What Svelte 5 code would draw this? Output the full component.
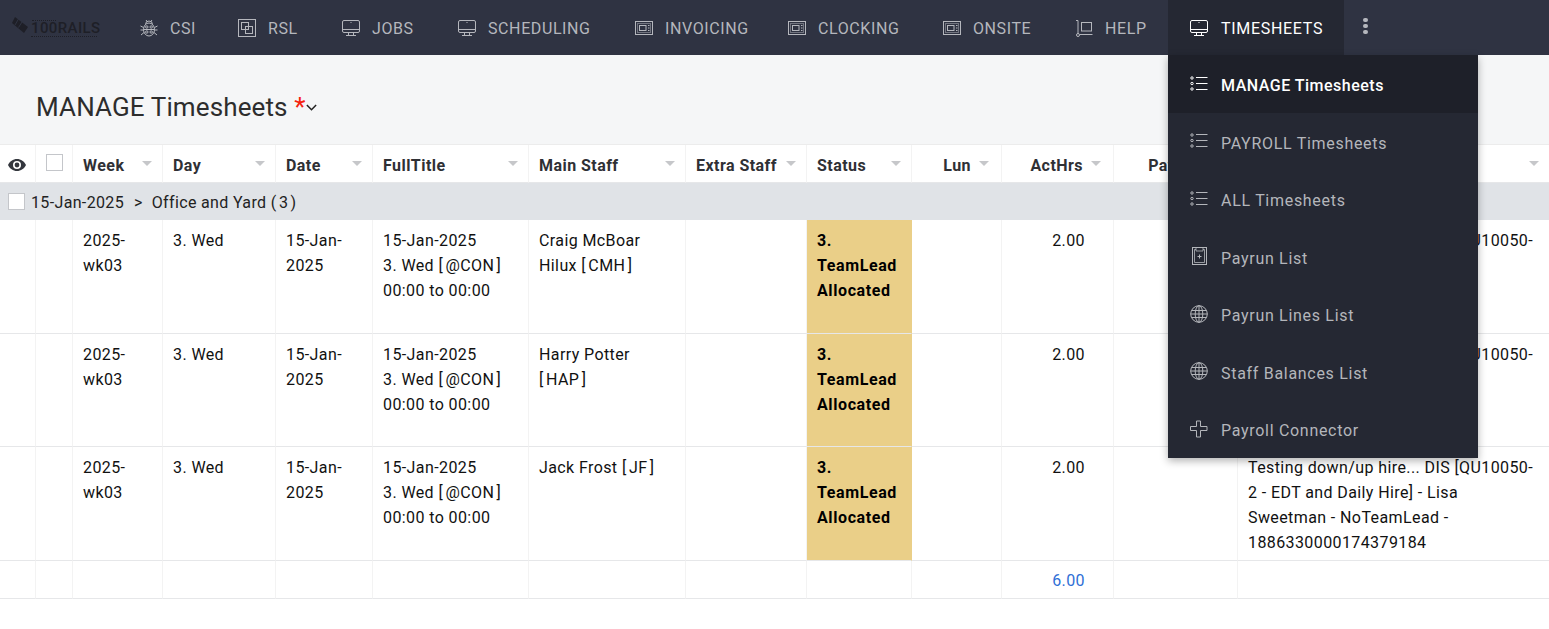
<script lang="ts">
	const navItems = [
		{ label: 'CSI', icon: 'bug' },
		{ label: 'RSL', icon: 'copy' },
		{ label: 'JOBS', icon: 'monitor' },
		{ label: 'SCHEDULING', icon: 'monitor' },
		{ label: 'INVOICING', icon: 'oven' },
		{ label: 'CLOCKING', icon: 'oven' },
		{ label: 'ONSITE', icon: 'oven' },
		{ label: 'HELP', icon: 'trolley' },
		{ label: 'TIMESHEETS', icon: 'monitor', active: true }
	];

	const menuItems = [
		{ label: 'MANAGE Timesheets', icon: 'list', active: true },
		{ label: 'PAYROLL Timesheets', icon: 'list' },
		{ label: 'ALL Timesheets', icon: 'list' },
		{ label: 'Payrun List', icon: 'clipboard' },
		{ label: 'Payrun Lines List', icon: 'globe' },
		{ label: 'Staff Balances List', icon: 'globe' },
		{ label: 'Payroll Connector', icon: 'plus' }
	];

	const columns = [
		{ label: 'Week' },
		{ label: 'Day' },
		{ label: 'Date' },
		{ label: 'FullTitle' },
		{ label: 'Main Staff' },
		{ label: 'Extra Staff' },
		{ label: 'Status' },
		{ label: 'Lun', right: true },
		{ label: 'ActHrs', right: true },
		{ label: 'PayHrs', right: true },
		{ label: 'Description' }
	];

	const rows = [
		{ staff: 'Craig McBoar Hilux [\u202fCMH\u202f]' },
		{ staff: 'Harry Potter [\u202fHAP\u202f]' },
		{ staff: 'Jack Frost [\u202fJF\u202f]' }
	];
</script>

{#snippet icon(name: string)}
	<svg class="icon" viewBox="0 0 18 18" fill="none" stroke="currentColor" stroke-width="1">
		{#if name === 'bug'}
			<ellipse cx="9" cy="10.500" rx="5.500" ry="6.500" />
			<path d="M5.500 5.500a3.500 3.500 0 0 1 7 0M3.500 10.500h11M6 1 7.500 3M12 1 10.500 3M.5 7l3 1.500M17.500 7l-3 1.500M.5 11h3M17.500 11h-3M1 16l3-2.500M17 16l-3-2.500" />
			<circle cx="6.800" cy="8" r="1.200" />
			<circle cx="11.200" cy="8" r="1.200" />
			<circle cx="6.800" cy="13" r="1.200" />
			<circle cx="11.200" cy="13" r="1.200" />
		{:else if name === 'copy'}
			<rect x="0.500" y="0.500" width="17" height="17" />
			<rect x="3.500" y="3.500" width="7" height="7" />
			<rect x="7.500" y="7.500" width="7" height="7" />
		{:else if name === 'monitor'}
			<rect x="0.500" y="1.500" width="17" height="12" rx="1.500" />
			<path d="M0.500 10.500h17M6.500 13.500v2.500M11.500 13.500v2.500M4 16.500h10" />
			<path d="M8.500 3.500h1" />
		{:else if name === 'oven'}
			<rect x="0.500" y="2.500" width="17" height="13" />
			<rect x="2.500" y="4.500" width="13" height="9" stroke-opacity="0.5" />
			<rect x="4.500" y="6.500" width="6.500" height="5" />
			<path d="M13 6.500h1.500M13 9h1.500M13 11.500h1.500" />
		{:else if name === 'trolley'}
			<path d="M1 1.500h2v13.500M5 15.500h12.500" />
			<rect x="6.500" y="3.500" width="10" height="8.500" />
			<circle cx="3" cy="16" r="1.500" />
		{:else if name === 'list'}
			<circle cx="2" cy="3" r="1.200" />
			<circle cx="2" cy="8.500" r="1.200" />
			<circle cx="2" cy="14" r="1.200" />
			<path d="M6 2.500h11.500M6 8.500h11.500M6 14.500h11.500" />
		{:else if name === 'clipboard'}
			<rect x="2.500" y="0.500" width="14" height="17" />
			<path d="M4.500 2.500v13h10v-13h-1.500M6 2.500H4.500M6 1v3h7V1" stroke-opacity="0.8" />
			<path d="M9.500 7.500v4M7.500 9.500h4" />
		{:else if name === 'globe'}
			<circle cx="9" cy="9" r="8.300" />
			<ellipse cx="9" cy="9" rx="3.800" ry="8.300" />
			<path d="M9 .7v16.600M1.700 5.500h14.600M.7 9h16.600M1.700 12.500h14.600" />
		{:else if name === 'plus'}
			<path d="M6.500 1h4v5.500h6.500v4h-6.500V17h-4v-6.500H.5v-4h6z" />
		{/if}
	</svg>
{/snippet}

{#snippet sortHead(col: { label: string; right?: boolean })}
	<div class="th-inner" class:right={col.right}>
		<span>{col.label}</span>
		<i class="caret"></i>
	</div>
{/snippet}

<div class="page">
	<nav class="topbar">
		<div class="logo">
			<svg class="logo-mark" viewBox="0 0 16 16">
				<path fill="#1e1f27" d="M3 0 16 10l-4 6L0 6z" />
				<path stroke="#2f3342" stroke-width="1" d="M6.500 2 3 8M10 5 6.500 10.500" />
			</svg>
			<div class="logo-words">
				<span class="logo-rule short"></span>
				<span class="logo-text">100RAILS</span>
				<span class="logo-rule"></span>
			</div>
		</div>
		{#each navItems as item}
			<div class="nav-item" class:active={item.active}>
				{@render icon(item.icon)}
				<span>{item.label}</span>
			</div>
		{/each}
		<div class="kebab"><b></b><b></b><b></b></div>
	</nav>

	<header class="title-band">
		<h1>MANAGE Timesheets <em>*</em></h1>
		<svg class="chev" viewBox="0 0 10 6" fill="none" stroke="currentColor" stroke-width="1.400"><path d="M.8.8 5 5l4.200-4.200" /></svg>
	</header>

	<table>
		<colgroup>
			<col style="width:36px" />
			<col style="width:37px" />
			<col style="width:90px" />
			<col style="width:113px" />
			<col style="width:97px" />
			<col style="width:156px" />
			<col style="width:157px" />
			<col style="width:121px" />
			<col style="width:105px" />
			<col style="width:90px" />
			<col style="width:112px" />
			<col style="width:124px" />
			<col />
		</colgroup>
		<thead>
			<tr>
				<th class="eye-cell">
					<svg viewBox="0 0 18 12" width="18" height="12"><path fill="#33363d" d="M9 0C5 0 1.700 2.500 0 6c1.700 3.500 5 6 9 6s7.300-2.500 9-6c-1.700-3.500-5-6-9-6zm0 10a4 4 0 1 1 0-8 4 4 0 0 1 0 8zm0-6.400a2.400 2.400 0 1 0 0 4.800 2.400 2.400 0 0 0 0-4.800z" /></svg>
				</th>
				<th class="check-cell"><span class="checkbox"></span></th>
				{#each columns as col}
					<th>{@render sortHead(col)}</th>
				{/each}
			</tr>
		</thead>
		<tbody>
			<tr class="group">
				<td colspan="13">
					<div class="group-inner">
						<span class="checkbox"></span>
						<span>15-Jan-2025</span>
						<span class="gt">&gt;</span>
						<span>Office and Yard (&#8239;3&#8239;)</span>
					</div>
				</td>
			</tr>
			{#each rows as row}
				<tr class="data">
					<td></td>
					<td></td>
					<td>2025-wk03</td>
					<td>3. Wed</td>
					<td>15-Jan-2025</td>
					<td>15-Jan-2025<br />3. Wed [&#8239;@CON&#8239;]<br />00:00 to 00:00</td>
					<td>{row.staff}</td>
					<td></td>
					<td class="status">3. TeamLead Allocated</td>
					<td></td>
					<td class="num">2.00</td>
					<td></td>
					<td>Testing down/up hire... DIS [QU10050-2 - EDT and Daily Hire] - Lisa Sweetman - NoTeamLead - 1886330000174379184</td>
				</tr>
			{/each}
			<tr class="totals">
				<td></td>
				<td></td>
				<td></td>
				<td></td>
				<td></td>
				<td></td>
				<td></td>
				<td></td>
				<td></td>
				<td></td>
				<td class="num total">6.00</td>
				<td></td>
				<td></td>
			</tr>
		</tbody>
	</table>

	<ul class="menu">
		{#each menuItems as item}
			<li class:active={item.active}>
				{@render icon(item.icon)}
				<span>{item.label}</span>
			</li>
		{/each}
	</ul>
</div>

<style>
	:global(body) {
		background: #fff;
	}

	.page {
		position: relative;
		height: 629px;
		overflow: hidden;
		font-family: Roboto, 'Liberation Sans', sans-serif;
		font-size: 16px;
		color: #111;
	}

	.topbar {
		display: grid;
		grid-template-columns: 118px 98px 104px 116px 177px 153px 155px 132px 115px 176px 44px;
		height: 55px;
		background: #2f3342;
		color: #b5b7bd;
	}

	.logo {
		display: flex;
		align-items: center;
		gap: 3px;
		padding-left: 12px;
		color: #1e1f27;
	}

	.logo-mark {
		flex: none;
		width: 16px;
		height: 16px;
		margin-top: -5px;
	}

	.logo-words {
		display: flex;
		flex-direction: column;
		gap: 1px;
		margin-top: 1px;
	}

	.logo-text {
		font-size: 15px;
		line-height: 13px;
		font-weight: 500;
		letter-spacing: 0.4px;
	}

	.logo-rule {
		display: block;
		width: 66px;
		border-top: 1px dotted #1e1f27;
	}

	.logo-rule.short {
		width: 24px;
		margin-left: 1px;
	}

	.nav-item {
		display: flex;
		align-items: center;
		gap: 12px;
		padding-left: 22px;
		letter-spacing: 0.6px;
		white-space: nowrap;
	}

	.nav-item span {
		padding-top: 2px;
	}

	.nav-item.active {
		gap: 13px;
		letter-spacing: 0.7px;
		background: #252833;
		color: #fff;
	}

	.icon {
		width: 18px;
		height: 18px;
		flex: none;
	}

	.kebab {
		display: flex;
		flex-direction: column;
		gap: 2px;
		align-items: center;
		padding-top: 18px;
		margin-left: -1px;
	}

	.kebab b {
		width: 5px;
		height: 4px;
		border-radius: 2px;
		background: #b5b7bd;
	}

	.title-band {
		display: flex;
		align-items: center;
		height: 90px;
		box-sizing: border-box;
		padding: 14px 0 0 36px;
		background: #f5f6f7;
		border-bottom: 1px solid #ececec;
		color: #222;
	}

	h1 {
		margin: 0;
		font-size: 26px;
		font-weight: 400;
		letter-spacing: 0.12px;
		color: #2d2d2d;
	}

	h1 em {
		color: #f5220f;
		font-style: normal;
	}

	.chev {
		width: 11px;
		height: 7px;
		margin-top: 2px;
	}

	table {
		width: 1549px;
		table-layout: fixed;
		border-collapse: separate;
		border-spacing: 0;
		letter-spacing: 0.4px;
	}

	th {
		height: 38px;
		padding: 4px 10px 0;
		box-sizing: border-box;
		text-align: left;
		font-weight: 700;
		letter-spacing: 0.45px;
		color: #2f3035;
		border-right: 1px solid #f3f3f3;
		border-bottom: 1px solid #e6e7e9;
	}

	th:last-child {
		border-right: 0;
	}

	th:nth-child(12) .th-inner {
		padding-right: 6px;
	}

	.th-inner {
		display: flex;
		align-items: center;
		justify-content: space-between;
		white-space: nowrap;
	}

	.th-inner.right {
		justify-content: flex-end;
		gap: 8px;
		padding-right: 2px;
	}

	.caret {
		flex: none;
		width: 0;
		height: 0;
		margin-top: -5px;
		border-left: 5px solid transparent;
		border-right: 5px solid transparent;
		border-top: 5px solid #c6c7ca;
	}

	th.eye-cell {
		padding: 2px 0 0 8px;
	}

	.eye-cell svg {
		display: block;
	}

	th.check-cell {
		padding: 0 0 2px 10px;
	}

	.checkbox {
		display: block;
		flex: none;
		width: 17px;
		height: 17px;
		box-sizing: border-box;
		background: #fff;
		border: 1px solid #c4c6ca;
	}

	.group td {
		height: 37px;
		padding: 0 8px;
		box-sizing: border-box;
		background: #e0e3e7;
	}

	.group-inner {
		display: flex;
		align-items: center;
		color: #222;
		letter-spacing: 0.35px;
	}

	.group-inner .checkbox {
		margin-right: 6px;
	}

	.group-inner span:not(.checkbox) {
		padding-top: 2px;
	}

	.gt {
		margin: 0 9px 0 10px;
	}

	.data td {
		height: 113.500px;
		padding: 8px 10px 4.500px;
		box-sizing: border-box;
		vertical-align: top;
		line-height: 25px;
		border-right: 1px solid #f3f3f3;
		border-bottom: 1px solid #e6e7e9;
	}

	.data td:last-child,
	.totals td:last-child {
		border-right: 0;
	}

	.data td.status {
		background: #eacf88;
		color: #000;
		font-weight: 700;
		letter-spacing: 0.6px;
		border-right-color: #eacf88;
	}

	.data td.num,
	.totals td.num {
		text-align: right;
		padding-right: 28px;
	}

	.totals td {
		height: 38px;
		box-sizing: border-box;
		padding-top: 3px;
		border-right: 1px solid #f3f3f3;
		border-bottom: 1px solid #e6e7e9;
	}

	.total {
		color: #2f6fd6;
	}

	.menu {
		position: absolute;
		top: 55px;
		left: 1168px;
		width: 310px;
		margin: 0;
		padding: 0;
		list-style: none;
		background: #252833;
		color: #b4b6bb;
		box-shadow: 0 3px 8px rgba(0, 0, 0, 0.3);
	}

	.menu li {
		display: flex;
		align-items: center;
		gap: 13px;
		height: 57.500px;
		padding-left: 22px;
		letter-spacing: 0.7px;
	}

	.menu li span {
		padding-top: 4px;
	}

	.menu li.active {
		background: #1e2029;
		color: #fff;
		font-weight: 500;
		letter-spacing: 0.5px;
	}
</style>
